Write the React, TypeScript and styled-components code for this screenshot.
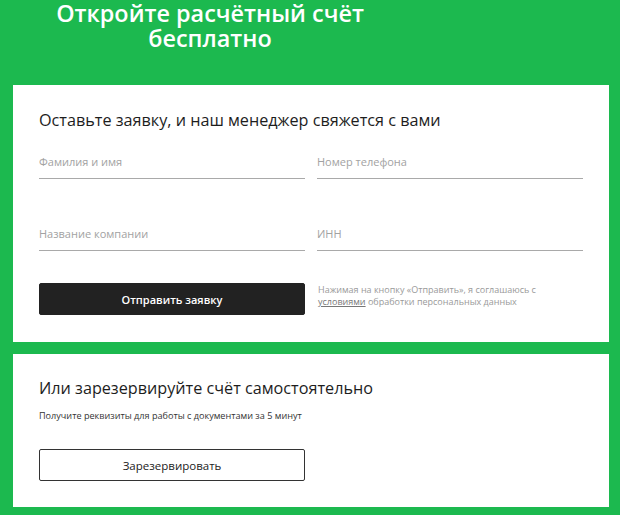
import React from 'react';
import styled, { createGlobalStyle } from 'styled-components';

const GlobalStyle = createGlobalStyle`
  * {
    box-sizing: border-box;
  }
  html,
  body {
    margin: 0;
    padding: 0;
    background: #1cb94f;
  }
  body {
    font-family: 'Open Sans', 'Liberation Sans', sans-serif;
  }
`;

const Page = styled.div`
  background: #1cb94f;
  min-height: 515px;
  padding: 1px 11px 8px 13px;
`;

const Hero = styled.div`
  width: 394px;
  height: 84px;
  text-align: center;
`;

const HeroTitle = styled.h1`
  margin: 0;
  color: #fff;
  font-size: 23.4px;
  font-weight: 600;
  line-height: 25px;
`;

const Card = styled.section<{ $top?: number; $bottom?: number }>`
  background: #fff;
  padding: ${({ $top }) => $top ?? 23}px 26px ${({ $bottom }) => $bottom ?? 27}px;
  & + & {
    margin-top: 12px;
  }
`;

const CardTitle = styled.h2`
  margin: 0;
  color: #1d1d1d;
  font-size: 16.2px;
  font-weight: 400;
  line-height: 24px;
`;

const FieldGrid = styled.div`
  display: grid;
  grid-template-columns: 266px 266px;
  column-gap: 12px;
  row-gap: 38px;
  margin-top: 13px;
`;

const Field = styled.input`
  display: block;
  width: 100%;
  height: 34px;
  padding: 0;
  border: none;
  border-bottom: 1px solid #a9a9a9;
  outline: none;
  background: transparent;
  font-family: inherit;
  font-size: 11px;
  color: #333;
  &::placeholder {
    color: #a2a2a2;
  }
`;

const ActionRow = styled.div`
  display: grid;
  grid-template-columns: 266px 1fr;
  column-gap: 13px;
  margin-top: 32px;
`;

const Button = styled.button<{ $outline?: boolean }>`
  width: 266px;
  height: 32px;
  border: 1px solid ${({ $outline }) => ($outline ? '#333' : '#222')};
  border-radius: 2px;
  background: ${({ $outline }) => ($outline ? '#fff' : '#222')};
  color: ${({ $outline }) => ($outline ? '#222' : '#fff')};
  font-family: inherit;
  font-size: ${({ $outline }) => ($outline ? 11.5 : 11)}px;
  font-weight: ${({ $outline }) => ($outline ? 500 : 600)};
  cursor: pointer;
`;

const Note = styled.p`
  margin: 0;
  padding-top: 1px;
  color: #9a9a9a;
  font-size: 9px;
  line-height: 12px;
  a {
    color: #777;
    text-decoration: underline;
  }
`;

const SubText = styled.p`
  margin: 9px 0 0;
  color: #333;
  font-size: 9.1px;
  line-height: 14px;
`;

const ButtonRow = styled.div`
  margin-top: 26px;
`;

export default function App() {
  return (
    <>
      <GlobalStyle />
      <Page>
        <Hero>
          <HeroTitle>
            Откройте расчётный счёт
            <br />
            бесплатно
          </HeroTitle>
        </Hero>

        <Card>
          <CardTitle>Оставьте заявку, и наш менеджер свяжется с вами</CardTitle>
          <FieldGrid>
            <Field placeholder="Фамилия и имя" />
            <Field placeholder="Номер телефона" />
            <Field placeholder="Название компании" />
            <Field placeholder="ИНН" />
          </FieldGrid>
          <ActionRow>
            <Button>Отправить заявку</Button>
            <Note>
              Нажимая на кнопку «Отправить», я соглашаюсь с
              <br />
              <a href="#">условиями</a> обработки персональных данных
            </Note>
          </ActionRow>
        </Card>

        <Card $top={22} $bottom={26}>
          <CardTitle>Или зарезервируйте счёт самостоятельно</CardTitle>
          <SubText>Получите реквизиты для работы с документами за 5 минут</SubText>
          <ButtonRow>
            <Button $outline>Зарезервировать</Button>
          </ButtonRow>
        </Card>
      </Page>
    </>
  );
}
